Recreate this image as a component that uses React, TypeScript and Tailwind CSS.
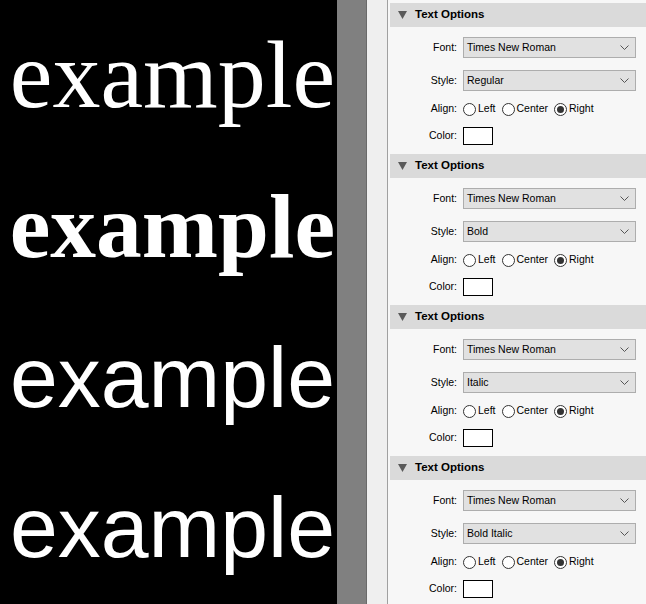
import React from "react";

type Sample = {
  style: string;
  font: string;
  cls: string;
};

const samples: Sample[] = [
  { style: "Regular", font: "Times New Roman", cls: "pt-[27px] text-[96px] font-normal [font-family:'Liberation_Serif',serif]" },
  { style: "Bold", font: "Times New Roman", cls: "pt-[30px] text-[91.5px] font-bold [font-family:'Liberation_Serif',serif]" },
  { style: "Italic", font: "Times New Roman", cls: "pt-[32px] text-[86px] font-normal [font-family:'Liberation_Sans',sans-serif]" },
  { style: "Bold Italic", font: "Times New Roman", cls: "pt-[31px] text-[86px] font-normal [font-family:'Liberation_Sans',sans-serif]" },
];

function Chevron() {
  return (
    <svg width="9" height="5" viewBox="0 0 9 5" className="text-[#555]">
      <path d="M0.5 0.5 L4.5 4.5 L8.5 0.5" fill="none" stroke="currentColor" strokeWidth="1" />
    </svg>
  );
}

function Select({ value }: { value: string }) {
  return (
    <div className="flex h-[21px] w-[173px] items-center justify-between border border-[#adadad] bg-[#e1e1e1] pl-[3px] pr-[6px]">
      <span>{value}</span>
      <Chevron />
    </div>
  );
}

function Radio({ label, checked }: { label: string; checked?: boolean }) {
  return (
    <div className="flex items-center gap-[2px]">
      <span className="flex h-[13px] w-[13px] items-center justify-center rounded-full border border-[#333] bg-white">
        {checked && <span className="h-[7px] w-[7px] rounded-full bg-[#333]" />}
      </span>
      <span>{label}</span>
    </div>
  );
}

function Row({ label, children, className }: { label: string; children: React.ReactNode; className?: string }) {
  return (
    <div className={"flex items-center " + (className ?? "")}>
      <span className="w-[67px] text-right">{label}</span>
      <div className="ml-[6px] flex items-center">{children}</div>
    </div>
  );
}

function Section({ s }: { s: Sample }) {
  return (
    <section className="flex flex-col">
      <div className="flex h-[24px] items-center bg-[#dadada] pl-[8px]">
        <svg width="9" height="8" viewBox="0 0 9 8" className="text-[#5a5a5a]">
          <path d="M0 0 H9 L4.5 8 Z" fill="currentColor" />
        </svg>
        <span className="ml-[8px] text-[11.5px] font-bold">Text Options</span>
      </div>
      <div className="flex h-[127px] flex-col pt-[10px]">
        <Row label="Font:">
          <Select value={s.font} />
        </Row>
        <Row label="Style:" className="mt-[12px]">
          <Select value={s.style} />
        </Row>
        <Row label="Align:" className="mt-[8px] h-[20px]">
          <div className="flex items-center gap-[6px]">
            <Radio label="Left" />
            <Radio label="Center" />
            <Radio label="Right" checked />
          </div>
        </Row>
        <Row label="Color:" className="mt-[8px]">
          <div className="h-[18px] w-[30px] border border-black bg-white" />
        </Row>
      </div>
    </section>
  );
}

export default function App() {
  return (
    <main className="flex h-[604px] w-[646px] overflow-hidden bg-[#f7f7f7] text-[10.5px] text-black [font-family:'Liberation_Sans',Arial,sans-serif]">
      <div className="flex w-[337px] shrink-0 flex-col bg-black">
        {samples.map((s, i) => (
          <div key={i} className={"h-[151px] shrink-0 whitespace-nowrap pr-[2px] text-right leading-none text-white " + s.cls}>
            example
          </div>
        ))}
      </div>
      <div className="w-[29px] shrink-0 bg-[#808080]" />
      <div className="w-px shrink-0 bg-[#6a6a6a]" />
      <div className="w-[20px] shrink-0 bg-[#efefef]" />
      <div className="w-px shrink-0 bg-[#a0a0a0]" />
      <div className="flex min-w-0 flex-1 flex-col pl-[2px] pt-[3px]">
        {samples.map((s, i) => (
          <Section key={i} s={s} />
        ))}
      </div>
    </main>
  );
}
